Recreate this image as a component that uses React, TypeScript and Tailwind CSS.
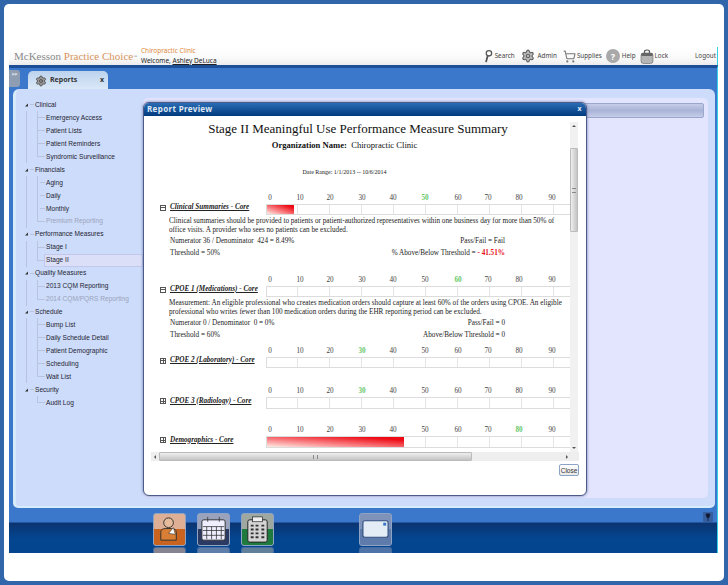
import { Settings, ShoppingCart } from 'lucide-react'

const tree = [
  { label: 'Clinical', top: true },
  { label: 'Emergency Access' },
  { label: 'Patient Lists' },
  { label: 'Patient Reminders' },
  { label: 'Syndromic Surveillance', last: true },
  { label: 'Financials', top: true },
  { label: 'Aging', arrow: true },
  { label: 'Daily', arrow: true },
  { label: 'Monthly', arrow: true },
  { label: 'Premium Reporting', last: true, disabled: true },
  { label: 'Performance Measures', top: true },
  { label: 'Stage I' },
  { label: 'Stage II', last: true, selected: true },
  { label: 'Quality Measures', top: true },
  { label: '2013 CQM Reporting' },
  { label: '2014 CQM/PQRS Reporting', last: true, disabled: true },
  { label: 'Schedule', top: true },
  { label: 'Bump List' },
  { label: 'Daily Schedule Detail' },
  { label: 'Patient Demographic' },
  { label: 'Scheduling' },
  { label: 'Wait List', last: true },
  { label: 'Security', top: true, end: true },
  { label: 'Audit Log', last: true, end: true },
]

const scale = [0, 10, 20, 30, 40, 50, 60, 70, 80, 90]

const sections = [
  {
    title: 'Clinical Summaries - Core',
    open: true,
    goal: 50,
    fill: 27,
    gap: 'mt-[16px]',
    lines: [
      'Clinical summaries should be provided to patients or patient-authorized representatives within one business day for more than 50% of',
      'office visits. A provider who sees no patients can be excluded.',
    ],
    numerator: 'Numerator 36 / Denominator  424 = 8.49%',
    pass: 'Pass/Fail = Fail',
    threshold: 'Threshold = 50%',
    above: '% Above/Below Threshold = ',
    delta: '- 41.51%',
  },
  {
    title: 'CPOE 1 (Medications) - Core',
    open: true,
    goal: 60,
    fill: 0,
    gap: 'mt-[17px]',
    lines: [
      'Measurement: An eligible professional who creates medication orders should capture at least 60% of the orders using CPOE. An eligible',
      'professional who writes fewer than 100 medication orders during the EHR reporting period can be excluded.',
    ],
    numerator: 'Numerator 0 / Denominator  0 = 0%',
    pass: 'Pass/Fail = 0',
    threshold: 'Threshold = 60%',
    above: 'Above/Below Threshold = 0',
  },
  { title: 'CPOE 2 (Laboratory) - Core', goal: 30, fill: 0, gap: 'mt-[6px]' },
  { title: 'CPOE 3 (Radiology) - Core', goal: 30, fill: 0, gap: 'mt-[18px]' },
  { title: 'Demographics - Core', goal: 80, fill: 137, gap: 'mt-[16px]' },
]

function TreeRow({ item }: { item: (typeof tree)[number] }) {
  if (item.top) {
    return (
      <div className="flex h-[12.94px] items-center">
        <span className="ml-[9px] flex w-[3px] justify-center">
          <svg width="4" height="4" viewBox="0 0 4 4"><path d="M0 4 4 0v4z" fill="#333" /></svg>
        </span>
        <span className="ml-[2px] h-px w-[4px] bg-[#b9c3dd]" />
        <span className="ml-[1px] text-[#1f2533]">{item.label}</span>
      </div>
    )
  }
  return (
    <div className="flex h-[12.94px] items-center">
      <span className={`ml-[10px] w-px self-stretch ${item.end ? '' : 'bg-[#b9c3dd]'}`} />
      <span className={`ml-[10px] w-px bg-[#b9c3dd] ${item.last ? 'mb-[6px] h-[7px]' : 'self-stretch'}`} />
      <span className={`h-px bg-[#b9c3dd] ${item.arrow ? 'ml-[2px] w-[5px]' : 'w-[7px]'}`} />
      {item.selected ? (
        <span className="ml-[-1px] flex h-full flex-1 items-center border border-[#c3c8ea] bg-[#dcdff8] pl-[1px] text-[#1f2533]">
          {item.label}
        </span>
      ) : (
        <span className={`ml-[1px] whitespace-nowrap ${item.disabled ? 'text-[#9aa3bb]' : 'text-[#1f2533]'}`}>{item.label}</span>
      )}
    </div>
  )
}

function ScaleRow({ goal }: { goal: number }) {
  return (
    <div className="grid h-[10px] grid-cols-[30px_30px_32px_31px_32px_33px_30px_31px_33px_18px] pl-[119px] leading-[10px] text-[#444]">
      {scale.map((n) => (
        <span
          key={n}
          className={`flex w-0 justify-center ${n === goal ? 'font-bold text-[#67c867]' : ''}`}
        >
          {n}
        </span>
      ))}
    </div>
  )
}

function Bar({ fill, tall }: { fill: number; tall: boolean }) {
  return (
    <div className={`relative flex flex-1 overflow-hidden border border-r-0 border-[#dcdcdc] ${tall ? 'h-[12px]' : 'h-[11px]'}`}>
      <span className="h-full w-[31px] border-r border-[#e4e4e4]" />
      {[1, 2, 3, 4, 5, 6, 7, 8].map((n) => (
        <span key={n} className="h-full w-[32px] shrink-0 border-r border-[#e4e4e4]" />
      ))}
      {fill > 0 && (
        <span
          className="absolute top-0 left-0 h-full bg-[linear-gradient(to_top_right,#fdeee6,#fb9a9c_30%,#ee0a14_85%)]"
          style={{ width: fill }}
        />
      )}
    </div>
  )
}

function Section({ s }: { s: (typeof sections)[number] }) {
  return (
    <div className={s.gap}>
      <ScaleRow goal={s.goal} />
      <div className="mt-px flex items-center pl-[9px]">
        <span className="mb-[4px] flex h-[6px] w-[6px] items-center justify-center border border-[#555]">
          <span className="relative h-px w-[4px] bg-[#555]">
            {!s.open && <span className="absolute top-[-2px] left-[1.5px] h-[5px] w-px bg-[#555]" />}
          </span>
        </span>
        <span className="mb-[4px] ml-[4px] h-[7px] w-[96px] leading-[7px] whitespace-nowrap font-bold text-[#222] italic underline">{s.title}</span>
        <Bar fill={s.fill} tall={s.title.startsWith('CPOE 3') || s.title.startsWith('Demo')} />
      </div>
      {s.lines && (
        <>
          <div className="mt-[2px] pl-[18px] leading-[9px] whitespace-nowrap text-[#222]">
            {s.lines.map((l) => (
              <div key={l}>{l}</div>
            ))}
          </div>
          <div className="mt-px flex h-[10px] items-center justify-between pr-[65px] pl-[19px] text-[#222]">
            <span className="whitespace-pre">{s.numerator}</span>
            <span>{s.pass}</span>
          </div>
          <div className="mt-[2px] flex h-[10px] items-center justify-between pr-[65px] pl-[19px] text-[#222]">
            <span>{s.threshold}</span>
            <span>
              {s.above}
              {s.delta && <b className="text-[#e8101a]">{s.delta}</b>}
            </span>
          </div>
        </>
      )}
    </div>
  )
}

function ReportModal() {
  return (
    <div className="absolute top-[34px] left-[134px] flex h-[394px] w-[444px] flex-col overflow-hidden rounded-[6px] border border-[#4d5b88] bg-white shadow-[0_0_3px_#6677aa]">
      <div className="flex h-[13px] shrink-0 items-center justify-between bg-[linear-gradient(#2a6cb4,#023a7e)] pr-[4px] pb-px pl-[3px] text-[8px] font-bold tracking-[0.35px] text-[#dfe9f6]">
        <span>Report Preview</span>
        <span className="text-[7px]">x</span>
      </div>
      <div className="mx-[7px] mt-[6px] flex h-[330px] font-['Liberation_Serif',serif] text-[7.2px]">
        <div className="w-[419px] overflow-hidden">
          <div className="h-[13px] pr-[5px] text-center text-[13px] leading-[13px] whitespace-nowrap text-[#111]">
            Stage II Meaningful Use Performance Measure Summary
          </div>
          <div className="mt-[4px] h-[12px] pr-[32px] text-center text-[8.6px] leading-[12px] text-[#111]">
            <b>Organization Name:</b>&nbsp;&nbsp;Chiropractic Clinic
          </div>
          <div className="mt-[16px] h-[10px] pr-[32px] text-center text-[6px] leading-[10px] text-[#222]">
            Date Range: 1/1/2013 -- 10/6/2014
          </div>
          {sections.map((s) => (
            <Section key={s.title} s={s} />
          ))}
        </div>
        <div className="flex w-[8px] flex-col items-center bg-[#f1f1f1] text-[#555]">
          <span className="mt-[3px] h-0 w-0 border-x-[2px] border-b-[2px] border-x-transparent border-b-[#555]" />
          <span className="mt-[21px] flex h-[84px] w-full items-center justify-center rounded-[1px] border border-[#bbb] bg-[linear-gradient(to_right,#eee,#c4c4c4)]">
            <span className="h-[5px] w-[4px] border-y border-[#888]" />
          </span>
          <span className="mt-auto mb-[3px] h-0 w-0 border-x-[2px] border-t-[2px] border-x-transparent border-t-[#555]" />
        </div>
      </div>
      <div className="mx-[7px] flex h-[9px] items-center bg-[#eeeeee]">
        <span className="ml-[3px] h-0 w-0 border-y-[2px] border-r-[2px] border-y-transparent border-r-[#555]" />
        <span className="ml-[3px] flex h-full w-[313px] items-center justify-center rounded-[1px] border border-[#bbb] bg-[linear-gradient(#eee,#c4c4c4)]">
          <span className="h-[4px] w-[5px] border-x border-[#888]" />
        </span>
        <span className="mr-[11px] ml-auto h-0 w-0 border-y-[2px] border-l-[2px] border-y-transparent border-l-[#555]" />
      </div>
      <div className="flex flex-1 justify-end pt-[3px] pr-[7px]">
        <button className="h-[12px] w-[20px] rounded-[2px] border border-[#8ba3c4] bg-[linear-gradient(#fff,#e8e8e8)] font-['Liberation_Sans',sans-serif] text-[6.5px] leading-[9px] text-[#333]">
          Close
        </button>
      </div>
    </div>
  )
}

function Tile({ top, bottom, children }: { top: string; bottom: string; children: React.ReactNode }) {
  return (
    <div className="flex w-[33px] flex-col">
      <div className={`h-[33px] overflow-hidden rounded-[3px] border border-[#8fa3c4] ${top}`}>
        <div className={`mt-[15px] h-[17px] ${bottom}`} />
        <svg viewBox="0 0 32 32" className="mt-[-32px] h-[31px] w-[31px]">
          {children}
        </svg>
      </div>
      <div className={`mt-px h-[6px] rounded-t-[3px] border-x border-t border-[#6f86ad] opacity-60 ${top}`} />
    </div>
  )
}

export default function App() {
  return (
    <div className="h-[585px] w-[728px] overflow-hidden bg-[#3166ab] p-[4px] font-['Noto_Sans',sans-serif] text-[7px]">
      <div className="flex h-[577px] flex-col rounded-[5px] bg-white pt-[43px] pr-[6px] pl-[5px]">
        <header className="flex h-[18px] items-center border-r border-[#34d0e8] bg-[linear-gradient(#ffffff,#fafafa_60%,#ececec)] pl-[5px] leading-none">
          <span className="w-[127px] font-['Liberation_Serif',serif] text-[11px] whitespace-nowrap text-[#8a8a8a]">
            McKesson <span className="text-[#d8965e]">Practice Choice</span>
            <sup className="text-[4px]">™</sup>
          </span>
          <div className="flex flex-col gap-[3px] text-[6.5px]">
            <span className="text-[#e08a3c]">Chiropractic Clinic</span>
            <span className="text-[#222]">
              Welcome, <span className="underline">Ashley DeLuca</span>
            </span>
          </div>
          <nav className="ml-auto flex items-center pr-[1px] text-[6.3px] text-[#444]">
            <svg viewBox="0 0 10 14" className="h-[14px] w-[9px]">
              <circle cx="5.5" cy="4" r="3" fill="#fff" stroke="#555" strokeWidth="1.4" />
              <path d="M4 7 2.4 13" stroke="#555" strokeWidth="2" strokeLinecap="round" />
            </svg>
            <span className="ml-[2px]">Search</span>
            <Settings className="ml-[6px] h-[14px] w-[14px] text-[#666]" fill="#bbb" />
            <span className="ml-[3px]">Admin</span>
            <ShoppingCart className="ml-[6px] h-[13px] w-[13px] text-[#777]" />
            <span className="ml-px">Supplies</span>
            <span className="ml-[4px] flex h-[14px] w-[14px] items-center justify-center rounded-full bg-[#a9a9a9] text-[9px] font-bold text-white">?</span>
            <span className="ml-[2px]">Help</span>
            <svg viewBox="0 0 14 15" className="ml-[4px] h-[15px] w-[14px]">
              <path d="M4.5 4V2.5q0-1.5 2.5-1.5t2.5 1.5V4" fill="none" stroke="#555" strokeWidth="1.2" />
              <rect x="1" y="4" width="12" height="10.5" rx="2.5" fill="#b5b5b5" stroke="#666" strokeWidth=".6" />
              <rect x="1" y="4" width="12" height="3" rx="1.5" fill="#666" />
            </svg>
            <span className="ml-px">Lock</span>
            <span className="ml-[27px]">Logout</span>
          </nav>
        </header>

        <div className="relative flex h-[443px] flex-col border-t-[3px] border-r border-t-[#1c4f96] border-r-[#34d0e8] bg-[#3b78cc]">
          <div className="flex h-[21px] shrink-0 items-start">
            <span className="mt-[2px] flex h-[17px] w-[11px] items-start justify-center rounded-r-[3px] bg-[#8f9db3] pt-[2px] text-[5px] leading-none font-bold text-white">
              &gt;&gt;
            </span>
            <div className="mt-[3px] ml-[8px] flex h-[19px] w-[80px] items-center rounded-t-[5px] bg-[linear-gradient(#bcd3ee,#dce9f8)] pr-[4px] pl-[7px] font-bold text-[#333]">
              <Settings className="h-[12px] w-[12px] text-[#555]" fill="#999" />
              <span className="ml-[3px]">Reports</span>
              <span className="ml-auto">x</span>
            </div>
          </div>
          <div className="mr-[2px] ml-[4px] flex h-[419px] rounded-t-[6px] rounded-b-[5px] border-b-2 border-l-[3px] border-[#d6ecfb] bg-[#cddcfa]">
            <aside className="w-[127px] shrink-0 pt-[9.5px] font-['Liberation_Sans',sans-serif] text-[6.6px]">
              {tree.map((item) => (
                <TreeRow key={item.label} item={item} />
              ))}
            </aside>
            <div className="mt-[9px] mr-[7px] mb-[8px] flex-1 rounded-[5px] bg-[#e3e4fd] pt-[5px] pr-[4px] pl-[8px]">
              <div className="h-[15px] rounded-[2px] border border-[#9aa6cc] bg-[linear-gradient(#c6cdea,#a9b3d6_50%,#c6cdea)]" />
            </div>
          </div>
          <ReportModal />
        </div>

        <footer className="relative flex h-[45px] border-r border-[#34d0e8] bg-[linear-gradient(#3b78cc_0,#3b78cc_14px,#0b3470_15px,#04458f_30px)] pt-[5px] pl-[144px]">
          <div className="flex gap-[11px]">
            <Tile top="bg-[#dfaf95]" bottom="bg-[#c8641f]">
              <circle cx="15" cy="9" r="5" fill="#e6bb9b" stroke="#333" />
              <path d="M7 27V19q0-4 5-4h6q5 0 5 4v8z" fill="#d97f35" stroke="#333" />
              <path d="M15 20l5-6 2 7z" fill="#fff" stroke="#333" strokeWidth=".6" />
            </Tile>
            <Tile top="bg-[#9aa3bb]" bottom="bg-[#2a3a63]">
              <rect x="4" y="6" width="24" height="21" rx="2" fill="#eef" stroke="#333" />
              <path d="M5 13h22M5 17h22M5 22h22M9 13v13M14 13v13M19 13v13M24 13v13M10 3v5M22 3v5" stroke="#333" strokeWidth=".8" />
            </Tile>
            <Tile top="bg-[#9ea8a0]" bottom="bg-[#1f7a3e]">
              <rect x="6" y="6" width="20" height="23" rx="2" fill="#d5d5d5" stroke="#222" />
              <rect x="11" y="3" width="10" height="5" fill="#eee" stroke="#222" strokeWidth=".7" />
              <path d="M9 12h3M14 12h3M20 12h3M9 16h3M14 16h3M20 16h3M9 20h3M14 20h3M20 20h3M9 24h3M14 24h3M20 24h3" stroke="#333" strokeWidth="2" />
            </Tile>
          </div>
          <div className="ml-[85px]">
            <Tile top="bg-[#7f93ba]" bottom="bg-[#5f7bab]">
              <rect x="3" y="7" width="26" height="17" rx="2" fill="#e4edf6" stroke="#33507f" strokeWidth="1.2" />
              <rect x="24" y="9" width="3" height="3" fill="#3877c8" />
            </Tile>
          </div>
          <svg viewBox="0 0 10 10" className="absolute top-[4px] right-[4px] h-[10px] w-[10px]">
            <rect width="10" height="10" rx="1" fill="#345e9e" />
            <path d="M3 2h4L6 5.5H4zM5 5.5V9" stroke="#111a33" fill="#111a33" strokeWidth=".8" />
          </svg>
        </footer>
      </div>
    </div>
  )
}
